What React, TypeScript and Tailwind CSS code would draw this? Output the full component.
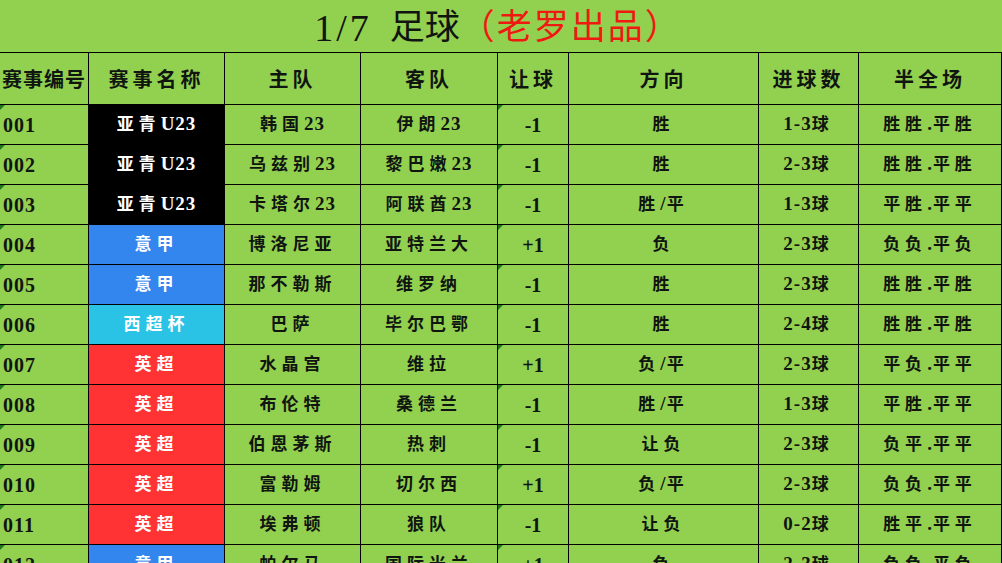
import React from 'react'

type Row = {
  no: string
  league: string
  color: 'black' | 'blue' | 'cyan' | 'red'
  home: string
  away: string
  hc: string
  dir: string
  goals: string
  hf: string
}

const rows: Row[] = [
  { no: '001', league: '亚青U23', color: 'black', home: '韩国23', away: '伊朗23', hc: '-1', dir: '胜', goals: '1-3球', hf: '胜胜.平胜' },
  { no: '002', league: '亚青U23', color: 'black', home: '乌兹别23', away: '黎巴嫩23', hc: '-1', dir: '胜', goals: '2-3球', hf: '胜胜.平胜' },
  { no: '003', league: '亚青U23', color: 'black', home: '卡塔尔23', away: '阿联酋23', hc: '-1', dir: '胜/平', goals: '1-3球', hf: '平胜.平平' },
  { no: '004', league: '意甲', color: 'blue', home: '博洛尼亚', away: '亚特兰大', hc: '+1', dir: '负', goals: '2-3球', hf: '负负.平负' },
  { no: '005', league: '意甲', color: 'blue', home: '那不勒斯', away: '维罗纳', hc: '-1', dir: '胜', goals: '2-3球', hf: '胜胜.平胜' },
  { no: '006', league: '西超杯', color: 'cyan', home: '巴萨', away: '毕尔巴鄂', hc: '-1', dir: '胜', goals: '2-4球', hf: '胜胜.平胜' },
  { no: '007', league: '英超', color: 'red', home: '水晶宫', away: '维拉', hc: '+1', dir: '负/平', goals: '2-3球', hf: '平负.平平' },
  { no: '008', league: '英超', color: 'red', home: '布伦特', away: '桑德兰', hc: '-1', dir: '胜/平', goals: '1-3球', hf: '平胜.平平' },
  { no: '009', league: '英超', color: 'red', home: '伯恩茅斯', away: '热刺', hc: '-1', dir: '让负', goals: '2-3球', hf: '负平.平平' },
  { no: '010', league: '英超', color: 'red', home: '富勒姆', away: '切尔西', hc: '+1', dir: '负/平', goals: '2-3球', hf: '负负.平平' },
  { no: '011', league: '英超', color: 'red', home: '埃弗顿', away: '狼队', hc: '-1', dir: '让负', goals: '0-2球', hf: '胜平.平平' },
  { no: '012', league: '意甲', color: 'blue', home: '帕尔马', away: '国际米兰', hc: '+1', dir: '负', goals: '2-3球', hf: '负负.平负' },
]

const leagueBg = {
  black: 'bg-black',
  blue: 'bg-[#3286ee]',
  cyan: 'bg-[#2ac3e6]',
  red: 'bg-[#ff3334]',
}

const headers = ['赛事编号', '赛事名称', '主队', '客队', '让球', '方向', '进球数', '半全场']

// split into CJK / latin runs so the CJK chars get the wide spacing
function Spaced({ text }: { text: string }) {
  const parts = text.match(/[\u3400-\u9fff]+|[^\u3400-\u9fff]+/g) || []
  return (
    <>
      {parts.map((p, i) =>
        /[\u3400-\u9fff]/.test(p) ? (
          <span key={i} className="text-[17px] font-semibold tracking-[5px]">{p}</span>
        ) : (
          <span key={i} className="text-[19px] font-bold tracking-[1px]">{p}</span>
        )
      )}
    </>
  )
}

function Flag() {
  return (
    <div className="absolute left-0 top-0 h-0 w-0 border-r-[5px] border-t-[5px] border-r-transparent border-t-[#1f7a1f]" />
  )
}

export default function App() {
  const font = { fontFamily: '"Liberation Serif", "Noto Sans CJK SC", serif' }
  return (
    <div className="h-[563px] w-[1002px] overflow-hidden bg-[#92d050] text-[#101510]" style={font}>
      <div className="flex h-[52px] items-center justify-center pr-[6px] pt-[3px]">
        <span className="text-[38px] leading-none tracking-[3px]">1/7</span>
        <span className="ml-[18px] text-[35px] leading-none">足球</span>
        <span className="text-[35px] leading-none tracking-[2px] text-[#ee1a12]">（老罗出品）</span>
      </div>

      <div className="grid gap-px bg-black pt-px pr-px grid-cols-[88px_135px_135px_136px_70px_189px_99px_142px] auto-rows-[39px] [grid-template-rows:51px]">
        {headers.map((h, i) => (
          <div
            key={h}
            className={`flex items-center bg-[#92d050] pt-[2px] text-[20px] font-bold ${i === 0 ? 'justify-start pl-[2px] tracking-[1px]' : 'justify-center tracking-[4px]'}`}
          >
            {h}
          </div>
        ))}

        {rows.map((r) => (
          <React.Fragment key={r.no}>
            <div className="relative flex items-center bg-[#92d050] pl-[3px] text-[20px] font-bold tracking-[1px]">
              <Flag />
              {r.no}
            </div>
            <div className={`flex items-center justify-center text-white ${leagueBg[r.color]}`}>
              <Spaced text={r.league} />
            </div>
            <div className="flex items-center justify-center bg-[#92d050]">
              <Spaced text={r.home} />
            </div>
            <div className="flex items-center justify-center bg-[#92d050]">
              <Spaced text={r.away} />
            </div>
            <div className="relative flex items-center justify-center bg-[#92d050] text-[20px] font-bold">
              <Flag />
              {r.hc}
            </div>
            <div className="flex items-center justify-center bg-[#92d050]">
              <Spaced text={r.dir} />
            </div>
            <div className="flex items-center justify-center bg-[#92d050]">
              <Spaced text={r.goals} />
            </div>
            <div className="flex items-center justify-center bg-[#92d050]">
              <Spaced text={r.hf} />
            </div>
          </React.Fragment>
        ))}
      </div>
    </div>
  )
}
